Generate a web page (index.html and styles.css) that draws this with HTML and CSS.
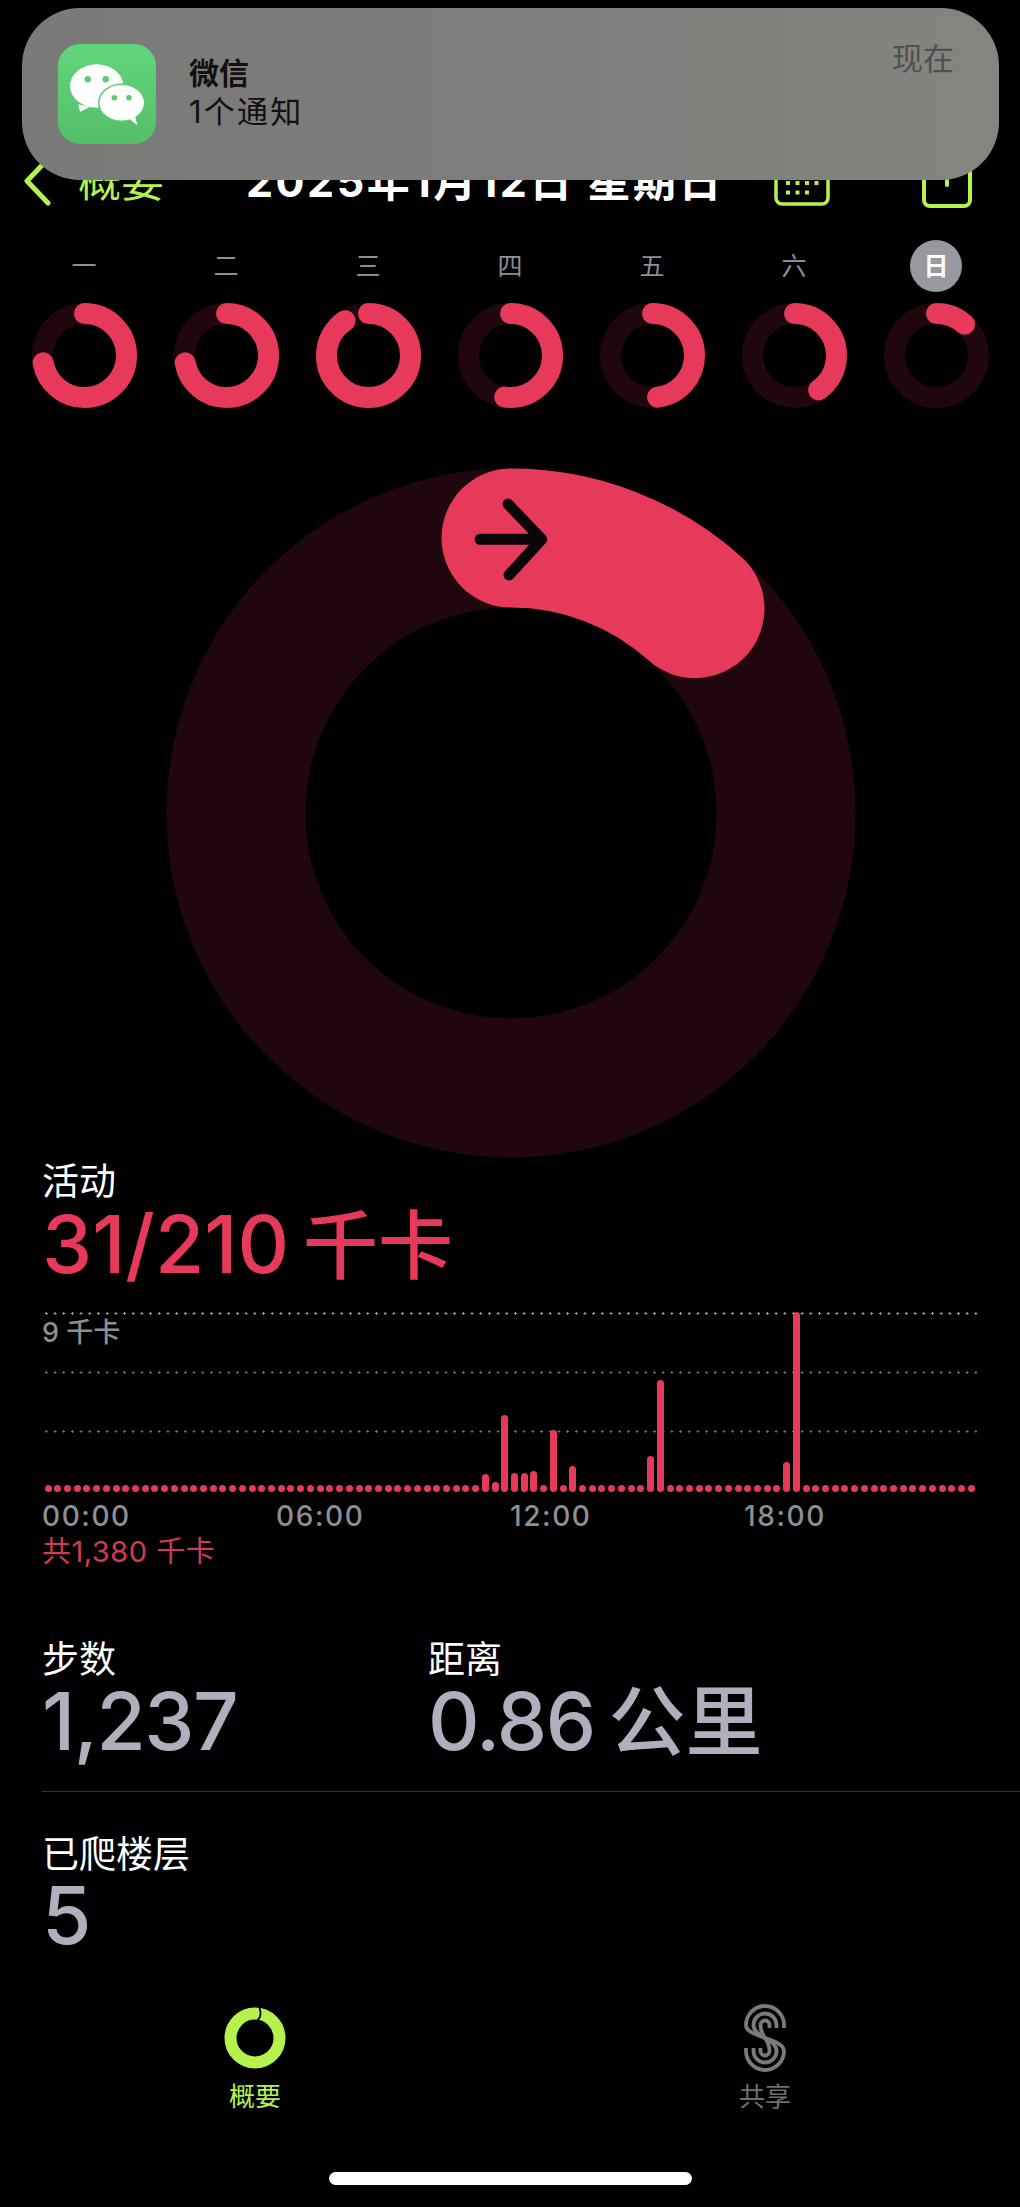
FILE: index.html
```html
<!DOCTYPE html>
<html lang="zh-CN">
<head>
    <meta charset="UTF-8">
    <meta name="viewport" content="width=device-width, initial-scale=1.0">
    <title>活动</title>
    <link rel="stylesheet" href="styles.css">
</head>
<body>

    <!-- notification sits over the top bar -->
    <div class="banner">
        <svg class="app-icon" viewBox="0 0 98 100">
            <ellipse class="bubble" cx="38.7" cy="42" rx="26.7" ry="21.7"/>
            <polygon class="bubble" points="20.3,60.3 22,68 32,62.7"/>
            <circle class="eye" cx="29.7" cy="35.3" r="3.2"/>
            <circle class="eye" cx="47.7" cy="35.3" r="3.2"/>
            <ellipse class="bubble outlined" cx="63.7" cy="58.7" rx="23" ry="18.5"/>
            <polygon class="bubble" points="72,75.3 79.3,81.3 77,72"/>
            <circle class="eye" cx="56.3" cy="53.7" r="2.8"/>
            <circle class="eye" cx="71" cy="53.7" r="2.8"/>
        </svg>
        <div class="banner-text">
            <p class="banner-title">微信</p>
            <p class="banner-body">1个通知</p>
        </div>
        <span class="banner-time">现在</span>
    </div>

    <div class="topbar">
        <svg class="back" viewBox="0 0 30 50"><path d="M26 3 L5 25 L26 47"/></svg>
        <span class="back-label">概要</span>
        <span class="title">2025年1月12日 星期日</span>
        <svg class="calendar" viewBox="0 0 56 56">
            <rect x="2" y="2" width="52" height="52" rx="6"/>
            <g class="cal-dots">
                <rect x="12" y="31" width="4" height="4"/>
                <rect x="21.500" y="31" width="4" height="4"/>
                <rect x="31" y="31" width="4" height="4"/>
                <rect x="40.500" y="31" width="4" height="4"/>
                <rect x="12" y="40.500" width="4" height="4"/>
                <rect x="21.500" y="40.500" width="4" height="4"/>
                <rect x="31" y="40.500" width="4" height="4"/>
            </g>
        </svg>
        <svg class="share" viewBox="0 0 50 60">
            <rect x="2" y="2" width="46" height="56" rx="6"/>
            <path d="M25 0 V37"/>
        </svg>
    </div>

    <div class="week">
        <div class="day">
            <span class="day-label">一</span>
            <svg class="mini-ring" viewBox="0 0 105 105"><circle class="track" cx="52.5" cy="52.5" r="42"/><circle class="progress" cx="52.5" cy="52.5" r="42" pathLength="360" stroke-dasharray="260 360" transform="rotate(-90 52.5 52.5)"/></svg>
        </div>
        <div class="day">
            <span class="day-label">二</span>
            <svg class="mini-ring" viewBox="0 0 105 105"><circle class="track" cx="52.5" cy="52.5" r="42"/><circle class="progress" cx="52.5" cy="52.5" r="42" pathLength="360" stroke-dasharray="260 360" transform="rotate(-90 52.5 52.5)"/></svg>
        </div>
        <div class="day">
            <span class="day-label">三</span>
            <svg class="mini-ring" viewBox="0 0 105 105"><circle class="track" cx="52.5" cy="52.5" r="42"/><circle class="progress" cx="52.5" cy="52.5" r="42" pathLength="360" stroke-dasharray="326 360" transform="rotate(-90 52.5 52.5)"/></svg>
        </div>
        <div class="day">
            <span class="day-label">四</span>
            <svg class="mini-ring" viewBox="0 0 105 105"><circle class="track" cx="52.5" cy="52.5" r="42"/><circle class="progress" cx="52.5" cy="52.5" r="42" pathLength="360" stroke-dasharray="188 360" transform="rotate(-90 52.5 52.5)"/></svg>
        </div>
        <div class="day">
            <span class="day-label">五</span>
            <svg class="mini-ring" viewBox="0 0 105 105"><circle class="track" cx="52.5" cy="52.5" r="42"/><circle class="progress" cx="52.5" cy="52.5" r="42" pathLength="360" stroke-dasharray="173 360" transform="rotate(-90 52.5 52.5)"/></svg>
        </div>
        <div class="day">
            <span class="day-label">六</span>
            <svg class="mini-ring" viewBox="0 0 105 105"><circle class="track" cx="52.5" cy="52.5" r="42"/><circle class="progress" cx="52.5" cy="52.5" r="42" pathLength="360" stroke-dasharray="145 360" transform="rotate(-90 52.5 52.5)"/></svg>
        </div>
        <div class="day">
            <span class="day-label today">日</span>
            <svg class="mini-ring" viewBox="0 0 105 105"><circle class="track" cx="52.5" cy="52.5" r="42"/><circle class="progress" cx="52.5" cy="52.5" r="42" pathLength="360" stroke-dasharray="42 360" transform="rotate(-90 52.5 52.5)"/></svg>
        </div>
    </div>

    <svg class="hero-ring" viewBox="0 0 690 690">
        <circle class="hero-track" cx="345" cy="345" r="275"/>
        <circle class="hero-progress" cx="345" cy="345" r="275" pathLength="360" stroke-dasharray="42 360" transform="rotate(-90 345 345)"/>
        <path class="hero-arrow" d="M314 71.300 H375 M342 36 L375.700 71.300 L343 107"/>
    </svg>

    <section class="activity">
        <p class="label">活动</p>
        <p class="value kcal">31/210<span class="unit">千卡</span></p>

        <div class="chart">
            <div class="grid-row"><span class="axis-label">9 千卡</span></div>
            <div class="grid-row"></div>
            <div class="grid-row"></div>

            <div class="bars">
                <i></i><i></i><i></i><i></i><i></i><i></i><i></i><i></i><i></i><i></i>
                <i></i><i></i><i></i><i></i><i></i><i></i><i></i><i></i><i></i><i></i>
                <i></i><i></i><i></i><i></i><i></i><i></i><i></i><i></i><i></i><i></i>
                <i></i><i></i><i></i><i></i><i></i><i></i><i></i><i></i><i></i><i></i>
                <i></i><i></i><i></i><i></i><i></i>
                <i style="height: 18px"></i><i style="height: 10px"></i><i style="height: 77px"></i><i style="height: 19px"></i><i style="height: 19px"></i>
                <i style="height: 21px"></i><i></i><i style="height: 62px"></i><i></i><i style="height: 26px"></i>
                <i></i><i></i><i></i><i></i><i></i><i></i><i></i>
                <i style="height: 36px"></i><i style="height: 112px"></i>
                <i></i><i></i><i></i><i></i><i></i><i></i><i></i><i></i><i></i><i></i><i></i><i></i>
                <i style="height: 30px"></i><i style="height: 180px"></i>
                <i></i><i></i><i></i><i></i><i></i><i></i><i></i><i></i><i></i>
                <i></i><i></i><i></i><i></i><i></i><i></i><i></i><i></i><i></i>
            </div>
        </div>

        <div class="hours">
            <span>00:00</span>
            <span>06:00</span>
            <span>12:00</span>
            <span>18:00</span>
        </div>
        <p class="total">共1,380 千卡</p>
    </section>

    <section class="stats">
        <div class="stat">
            <p class="label">步数</p>
            <p class="value">1,237</p>
        </div>
        <div class="stat">
            <p class="label">距离</p>
            <p class="value">0.86<span class="unit">公里</span></p>
        </div>
    </section>

    <hr class="divider">

    <section class="floors">
        <p class="label">已爬楼层</p>
        <p class="value">5</p>
    </section>

    <nav class="tabs">
        <div class="tab active">
            <svg class="tab-icon" viewBox="0 0 62 68">
                <circle class="tab-ring" cx="31" cy="34" r="24.500"/>
                <path class="tab-ring-cut" d="M35.300 3 C37 7 37.500 13 33.500 16"/>
            </svg>
            <span>概要</span>
        </div>
        <div class="tab">
            <svg class="tab-icon" viewBox="0 0 42 68">
                <g class="tab-s">
                    <path d="M40 24 V21 A19 19 0 0 0 2 21 C2 34 40 34 40 47 A19 19 0 0 1 2 47 V44"/>
                    <path d="M32.500 24 V21 A11.500 11.500 0 0 0 9.500 21 C9.500 34 32.500 34 32.500 47 A11.500 11.500 0 0 1 9.500 47 V44"/>
                    <path d="M25.500 24 V21 A4.500 4.500 0 0 0 16.500 21 C16.500 34 25.500 34 25.500 47 A4.500 4.500 0 0 1 16.500 47 V44"/>
                </g>
            </svg>
            <span>共享</span>
        </div>
    </nav>

    <div class="home-bar"></div>

</body>
</html>
```

FILE: styles.css
```css
* {
    margin: 0;
    padding: 0;
    box-sizing: border-box;
}

body {
    position: relative;
    width: 1020px;
    height: 2207px;
    overflow: hidden;
    background-color: #000;
    color: #fff;
    font-family: "Inter", "Noto Sans CJK SC", sans-serif;
}

/* ---------- notification ---------- */

.banner {
    position: absolute;
    z-index: 1;
    top: 8px;
    left: 22px;
    width: 977px;
    height: 172px;
    display: flex;
    padding: 36px 46px 0 36px;
    border-radius: 58px;
    background: linear-gradient(90deg, #7a7a78, #7d7d7c 50%, #858580);
}

.app-icon {
    width: 98px;
    height: 100px;
    border-radius: 22px;
    background: linear-gradient(180deg, #62d57b, #54bf69);
}

.bubble {
    fill: #fff;
}

.bubble.outlined {
    stroke: #5ccb72;
    stroke-width: 1.500;
}

.eye {
    fill: #5ccb72;
}

.banner-text {
    margin-left: 33px;
    padding-top: 9px;
    flex: 1;
    color: #111;
}

.banner-title {
    font-size: 30px;
    font-weight: 700;
    line-height: 40px;
}

.banner-body {
    font-size: 31px;
    letter-spacing: 2.200px;
    line-height: 38px;
}

.banner-time {
    font-size: 31px;
    line-height: 40px;
    color: #505050;
    margin-top: -5px;
    margin-right: -1px;
}

/* ---------- top bar ---------- */

.topbar {
    display: flex;
    align-items: center;
    height: 46px;
    margin-top: 160px;
    padding-left: 22px;
}

.back {
    width: 30px;
    height: 50px;
    margin-top: -4px;
    fill: none;
    stroke: #b6f24e;
    stroke-width: 5;
    stroke-linecap: round;
    stroke-linejoin: round;
}

.back-label {
    margin-left: 26px;
    margin-top: -5px;
    font-size: 43px;
    color: #b6f24e;
    line-height: 46px;
}

.title {
    margin-left: 82px;
    margin-top: -5px;
    font-size: 43px;
    font-weight: 700;
    letter-spacing: 2.500px;
    line-height: 46px;
    white-space: nowrap;
}

.calendar {
    width: 56px;
    height: 56px;
    margin-left: 50px;
    margin-top: -10px;
    fill: none;
    stroke: #b6f24e;
    stroke-width: 3.500;
}

.cal-dots {
    fill: #b6f24e;
    stroke: none;
}

.share {
    width: 50px;
    height: 60px;
    margin-left: 92px;
    margin-top: -10px;
    fill: none;
    stroke: #b6f24e;
    stroke-width: 4;
    stroke-linecap: round;
}

/* ---------- week rings ---------- */

.week {
    display: grid;
    grid-template-columns: repeat(7, 142px);
    margin-top: 34px;
    padding-left: 13px;
}

.day {
    display: flex;
    flex-direction: column;
    align-items: center;
    gap: 11px;
}

.day-label {
    width: 52px;
    height: 52px;
    font-size: 25px;
    line-height: 52px;
    text-align: center;
    color: #8e8e93;
}

.day-label.today {
    border-radius: 50%;
    background-color: #98989f;
    color: #fff;
    font-weight: 700;
}

.mini-ring {
    width: 105px;
    height: 105px;
    display: block;
}

.track,
.progress,
.hero-track,
.hero-progress {
    fill: none;
    stroke-width: 21;
}

.track,
.hero-track {
    stroke: #20060d;
}

.progress,
.hero-progress {
    stroke: #e73a5a;
    stroke-linecap: round;
}

.hero-track,
.hero-progress {
    stroke-width: 139;
}

.hero-ring {
    display: block;
    width: 690px;
    height: 690px;
    margin: 60px 0 0 166px;
}

.hero-arrow {
    fill: none;
    stroke: #0a0508;
    stroke-width: 11;
    stroke-linecap: round;
    stroke-linejoin: round;
}

/* ---------- activity ---------- */

.activity {
    margin-top: 4px;
    padding-left: 42px;
}

.label {
    font-size: 37px;
    line-height: 40px;
}

.value {
    font-size: 80px;
    line-height: 80px;
    font-weight: 500;
    color: #aeb1bd;
    white-space: nowrap;
}

.value .unit {
    margin-left: 14px;
    font-size: 77px;
    line-height: 0;
    letter-spacing: 0;
}

.kcal {
    margin-top: 2px;
    color: #e73a5a;
}

.kcal .unit {
    font-size: 75px;
}

.chart {
    position: relative;
    width: 935px;
    height: 180px;
    margin-top: 28px;
}

.grid-row {
    height: 59px;
    background-image: radial-gradient(circle, #6e6e6e 1px, transparent 1.300px);
    background-size: 8.700px 3px;
    background-repeat: repeat-x;
    background-position: 0 0;
}

.grid-row:first-child {
    background-image: radial-gradient(circle, #a0a0a0 1px, transparent 1.300px);
}

.axis-label {
    display: block;
    padding-top: 4px;
    font-size: 27px;
    font-weight: 500;
    line-height: 34px;
    color: #8e8e93;
}

.bars {
    position: absolute;
    left: 2.500px;
    right: 1.500px;
    bottom: 0;
    display: flex;
    justify-content: space-between;
    align-items: flex-end;
}

.bars i {
    display: block;
    width: 7px;
    height: 7px;
    border-radius: 3.500px;
    background-color: #e73a5a;
}

.hours {
    display: grid;
    grid-template-columns: repeat(4, 234px);
    margin-top: 8px;
    font-size: 28px;
    font-weight: 500;
    letter-spacing: 1.600px;
    line-height: 32px;
    color: #8e8e93;
}

.total {
    margin-top: 4px;
    font-size: 29px;
    letter-spacing: 0.500px;
    line-height: 32px;
    color: #d03a57;
}

/* ---------- stats ---------- */

.stats {
    display: grid;
    grid-template-columns: 386px 1fr;
    margin-top: 72px;
    padding-left: 42px;
}

.stats .value {
    margin-top: 1px;
    letter-spacing: -1.500px;
}

.divider {
    height: 1px;
    margin: 30px 0 0 42px;
    border: 0;
    background-color: #333336;
}

.floors {
    margin-top: 43px;
    padding-left: 42px;
}

/* ---------- tab bar ---------- */

.tabs {
    display: grid;
    grid-template-columns: 510px 510px;
    margin-top: 49px;
}

.tab {
    display: flex;
    flex-direction: column;
    align-items: center;
    gap: 9px;
    font-size: 26px;
    line-height: 32px;
    color: #6f6f6f;
}

.tab.active {
    color: #b6f24e;
}

.tab-icon {
    height: 68px;
    display: block;
}

.tab.active .tab-icon {
    width: 62px;
}

.tab-ring {
    fill: none;
    stroke: #b6f24e;
    stroke-width: 12;
}

.tab-ring-cut {
    fill: none;
    stroke: #000;
    stroke-width: 1.800;
}

.tab-s {
    fill: none;
    stroke: #7a7a7a;
    stroke-width: 3.800;
}

.home-bar {
    width: 363px;
    height: 13px;
    margin: 59px 0 0 329px;
    border-radius: 7px;
    background-color: #fff;
}
```
